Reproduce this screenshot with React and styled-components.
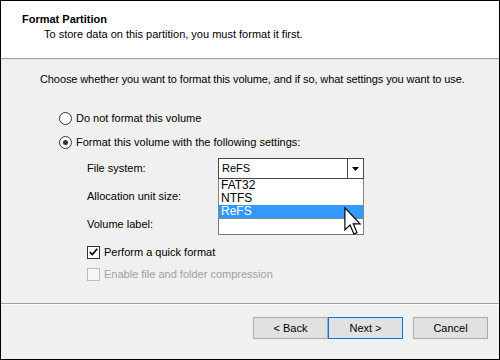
import React from "react";
import styled, { createGlobalStyle } from "styled-components";

const Global = createGlobalStyle`
  html, body { margin: 0; padding: 0; background: #fff; }
  body { font-family: "Liberation Sans", Arial, sans-serif; font-size: 11px; color: #000; }
`;

const Frame = styled.div`
  width: 500px;
  height: 360px;
  box-sizing: border-box;
  border: 1px solid #000;
  display: flex;
  flex-direction: column;
  background: #f0f0f0;
  position: relative;
  overflow: hidden;
  white-space: nowrap;
`;

const Header = styled.div`
  height: 57px;
  background: #fff;
  border-bottom: 1px solid #a0a0a0;
  box-shadow: 0 1px 0 #e3e3e3;
  box-sizing: content-box;
  padding: 0 0 0 21px;
  display: flex;
  flex-direction: column;
`;

const Title = styled.div`
  font-weight: bold;
  margin-top: 11px;
  line-height: 15px;
`;

const Subtitle = styled.div`
  padding-left: 22px;
  line-height: 15px;
`;

const Body = styled.div`
  flex: 1;
  padding: 13px 0 0 39px;
  display: flex;
  flex-direction: column;
`;

const Intro = styled.div`
  line-height: 15px;
  letter-spacing: -0.1px;
`;

const Options = styled.div`
  margin-top: 23px;
  padding-left: 19px;
  display: flex;
  flex-direction: column;
  gap: 8px;
`;

const OptionRow = styled.div`
  display: flex;
  align-items: center;
  height: 16px;
  gap: 4px;
  color: ${(p) => (p.disabled ? "#a0a0a0" : "#000")};
`;

const Radio = styled.span`
  width: 11px;
  height: 11px;
  border-radius: 50%;
  border: 1px solid #333;
  background: #fff;
  display: flex;
  align-items: center;
  justify-content: center;
  flex: none;
  &::after {
    content: "";
    width: 5px;
    height: 5px;
    border-radius: 50%;
    background: #333;
    display: ${(p) => (p.checked ? "block" : "none")};
  }
`;

const Settings = styled.div`
  margin-top: 8px;
  padding-left: 47px;
  display: grid;
  grid-template-columns: 131px 146px;
  grid-auto-rows: 21px;
  row-gap: 7px;
  align-items: center;
`;

const FieldLabel = styled.div`
  line-height: 15px;
`;

const FieldHolder = styled.div`
  position: relative;
  height: 21px;
`;

const Combo = styled.div`
  height: 21px;
  box-sizing: border-box;
  border: 1px solid #4a4a4a;
  background: #fff;
  display: flex;
  align-items: center;
`;

const ComboText = styled.div`
  flex: 1;
  padding-left: 3px;
  line-height: 15px;
`;

const ComboButton = styled.div`
  width: 15px;
  height: 100%;
  border-left: 1px solid #4a4a4a;
  display: flex;
  align-items: center;
  justify-content: center;
`;

const TextBox = styled.div`
  height: 21px;
  box-sizing: border-box;
  border: 1px solid #7a7a7a;
  background: #fff;
`;

const DropList = styled.div`
  position: absolute;
  left: 0;
  top: 21px;
  width: 146px;
  height: 40px;
  box-sizing: border-box;
  border: 1px solid #828790;
  border-top: none;
  background: #fff;
  z-index: 2;
  display: flex;
  flex-direction: column;
`;

const ListItem = styled.div`
  height: 13px;
  line-height: 13px;
  padding-left: 2px;
  font-size: 12px;
  background: ${(p) => (p.selected ? "#3399ff" : "transparent")};
  color: ${(p) => (p.selected ? "#fff" : "#000")};
`;

const Checks = styled.div`
  margin-top: 9px;
  padding-left: 47px;
  display: flex;
  flex-direction: column;
  gap: 6px;
`;

const CheckBox = styled.span`
  width: 11px;
  height: 11px;
  border: 1px solid ${(p) => (p.disabled ? "#bcbcbc" : "#333")};
  background: ${(p) => (p.disabled ? "#f6f6f6" : "#fff")};
  display: flex;
  align-items: center;
  justify-content: center;
  flex: none;
`;

const Footer = styled.div`
  height: 42px;
  border-top: 1px solid #a0a0a0;
  box-shadow: inset 0 1px 0 #fff;
  display: flex;
  justify-content: flex-end;
  align-items: flex-start;
  padding: 13px 11px 0 0;
`;

const ButtonPair = styled.div`
  display: flex;
  margin-right: 10px;
`;

const Button = styled.div`
  width: 75px;
  height: 22px;
  box-sizing: border-box;
  border: 1px solid ${(p) => (p.primary ? "#0078d7" : "#adadad")};
  background: #e1e1e1;
  display: flex;
  align-items: center;
  justify-content: center;
  line-height: 15px;
`;

const Cursor = styled.svg`
  position: absolute;
  left: 343px;
  top: 206px;
  z-index: 5;
`;

export default function App() {
  return (
    <>
      <Global />
      <Frame>
        <Header>
          <Title>Format Partition</Title>
          <Subtitle>To store data on this partition, you must format it first.</Subtitle>
        </Header>
        <Body>
          <Intro>Choose whether you want to format this volume, and if so, what settings you want to use.</Intro>
          <Options>
            <OptionRow>
              <Radio />
              <span>Do not format this volume</span>
            </OptionRow>
            <OptionRow>
              <Radio checked />
              <span>Format this volume with the following settings:</span>
            </OptionRow>
          </Options>
          <Settings>
            <FieldLabel>File system:</FieldLabel>
            <FieldHolder>
              <Combo>
                <ComboText>ReFS</ComboText>
                <ComboButton>
                  <svg width="7" height="4" viewBox="0 0 7 4">
                    <path d="M0 0 H7 L3.5 4 Z" fill="#000" />
                  </svg>
                </ComboButton>
              </Combo>
              <DropList>
                <ListItem>FAT32</ListItem>
                <ListItem>NTFS</ListItem>
                <ListItem selected>ReFS</ListItem>
              </DropList>
            </FieldHolder>
            <FieldLabel>Allocation unit size:</FieldLabel>
            <FieldHolder>
              <Combo />
            </FieldHolder>
            <FieldLabel>Volume label:</FieldLabel>
            <FieldHolder>
              <TextBox />
            </FieldHolder>
          </Settings>
          <Checks>
            <OptionRow>
              <CheckBox>
                <svg width="9" height="8" viewBox="0 0 9 8">
                  <path d="M0.8 4.2 L3.3 6.6 L8.2 0.8" fill="none" stroke="#000" strokeWidth="1.6" />
                </svg>
              </CheckBox>
              <span>Perform a quick format</span>
            </OptionRow>
            <OptionRow disabled>
              <CheckBox disabled />
              <span>Enable file and folder compression</span>
            </OptionRow>
          </Checks>
        </Body>
        <Footer>
          <ButtonPair>
            <Button>&lt; Back</Button>
            <Button primary>Next &gt;</Button>
          </ButtonPair>
          <Button>Cancel</Button>
        </Footer>
        <Cursor width="18" height="28" viewBox="0 0 12 19">
          <path
            d="M0.5 0.5 L0.5 15.5 L4 12.2 L6.6 18.3 L8.7 17.4 L6.2 11.4 L10.8 11.4 Z"
            fill="#fff"
            stroke="#000"
            strokeWidth="0.8"
            strokeLinejoin="miter"
          />
        </Cursor>
      </Frame>
    </>
  );
}
